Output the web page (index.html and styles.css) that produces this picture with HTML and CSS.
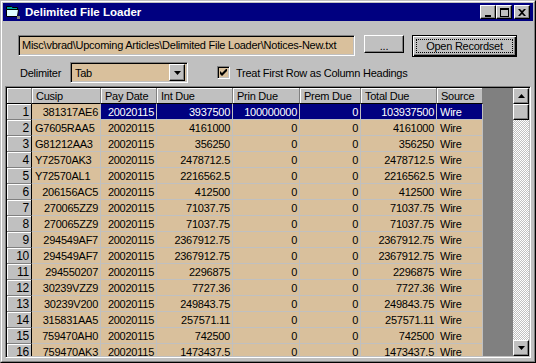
FILE: index.html
```html
<!DOCTYPE html>
<html lang="en">
<head>
    <meta charset="UTF-8">
    <title>Delimited File Loader</title>
    <link rel="stylesheet" href="styles.css">
</head>
<body>
    <div class="window">
        <div class="window-frame">
            <!-- title bar -->
            <div class="title-bar">
                <svg class="app-icon" width="16" height="16" viewBox="0 0 16 16">
                    <path d="M1.5 2.5h5l1 1h5v8h-11z" fill="#00a0a0" stroke="#000"/>
                    <path d="M1.5 5.5h12l-1 7h-11z" fill="#e0ffff" stroke="#000"/>
                    <path d="M12 12h3v3h-3z" fill="#808080"/>
                </svg>
                <span class="title-text">Delimited File Loader</span>
                <div class="title-buttons">
                    <div class="cap-btn">
                        <svg width="8" height="9" viewBox="0 0 8 9"><rect x="1" y="7" width="6" height="2"/></svg>
                    </div>
                    <div class="cap-btn">
                        <svg width="9" height="9" viewBox="0 0 9 9"><path d="M0 0h9v9H0z M1 2v6h7V2z" fill-rule="evenodd"/></svg>
                    </div>
                    <div class="cap-btn close">
                        <svg width="8" height="7" viewBox="0 0 8 7"><path d="M0 0h2l2 2 2-2h2L5 3.5 8 7H6L4 5 2 7H0l3-3.5z"/></svg>
                    </div>
                </div>
            </div>

            <div class="client">
                <div class="file-row">
                    <div class="textbox path-box">Misc\vbrad\Upcoming Articles\Delimited File Loader\Notices-New.txt</div>
                    <div class="button browse-button">...</div>
                    <div class="button default-button"><span class="focus-rect">Open Recordset</span></div>
                </div>

                <div class="options-row">
                    <span class="delim-label">Delimiter</span>
                    <div class="textbox combo">
                        <span class="combo-text">Tab</span>
                        <div class="combo-arrow">
                            <svg width="7" height="4" viewBox="0 0 7 4"><path d="M0 0h7L3.5 4z"/></svg>
                        </div>
                    </div>
                    <div class="checkbox">
                        <svg width="7" height="7" viewBox="0 0 7 7"><path d="M0 2l2 2 5-5v3l-5 5-2-2z"/></svg>
                    </div>
                    <span class="check-label">Treat First Row as Column Headings</span>
                </div>

                <div class="grid-box">
                    <div class="grid-area">
                        <div class="grid" id="grid"></div>
                    </div>
                    <div class="scrollbar">
                        <div class="scroll-btn">
                            <svg width="7" height="4" viewBox="0 0 7 4"><path d="M3.5 0L7 4H0z"/></svg>
                        </div>
                        <div class="scroll-btn"></div>
                        <div class="scroll-track"></div>
                        <div class="scroll-btn">
                            <svg width="7" height="4" viewBox="0 0 7 4"><path d="M0 0h7L3.5 4z"/></svg>
                        </div>
                    </div>
                </div>
            </div>
        </div>
    </div>

    <script>
        const headings = ["", "Cusip", "Pay Date", "Int Due", "Prin Due", "Prem Due", "Total Due", "Source"];

        const rows = [
            ["381317AE6", "20020115", "3937500", "100000000", "0", "103937500"],
            ["G7605RAA5", "20020115", "4161000", "0", "0", "4161000"],
            ["G81212AA3", "20020115", "356250", "0", "0", "356250"],
            ["Y72570AK3", "20020115", "2478712.5", "0", "0", "2478712.5"],
            ["Y72570AL1", "20020115", "2216562.5", "0", "0", "2216562.5"],
            ["206156AC5", "20020115", "412500", "0", "0", "412500"],
            ["270065ZZ9", "20020115", "71037.75", "0", "0", "71037.75"],
            ["270065ZZ9", "20020115", "71037.75", "0", "0", "71037.75"],
            ["294549AF7", "20020115", "2367912.75", "0", "0", "2367912.75"],
            ["294549AF7", "20020115", "2367912.75", "0", "0", "2367912.75"],
            ["294550207", "20020115", "2296875", "0", "0", "2296875"],
            ["30239VZZ9", "20020115", "7727.36", "0", "0", "7727.36"],
            ["30239V200", "20020115", "249843.75", "0", "0", "249843.75"],
            ["315831AA5", "20020115", "257571.11", "0", "0", "257571.11"],
            ["759470AH0", "20020115", "742500", "0", "0", "742500"],
            ["759470AK3", "20020115", "1473437.5", "0", "0", "1473437.5"]
        ];

        const grid = document.getElementById("grid");

        function addCell(text, className) {
            const cell = document.createElement("div");
            cell.className = "cell " + className;
            cell.textContent = text;
            grid.appendChild(cell);
        }

        headings.forEach(function(h) {
            addCell(h, "fixed head");
        });

        rows.forEach(function(r, i) {
            addCell(i + 1, "fixed row-head");
            // numbers (and cusips starting with a digit) are right aligned
            const cusipAlign = /^\d/.test(r[0]) ? "right" : "left";
            addCell(r[0], cusipAlign);
            for (let c = 1; c < r.length; c++) {
                addCell(r[c], "right" + (i === 0 ? " sel" : ""));
            }
            addCell("Wire", "left" + (i === 0 ? " sel" : ""));
        });
    </script>
</body>
</html>
```

FILE: styles.css
```css
body {
    margin: 0;
    font-family: "Liberation Sans", Arial, sans-serif;
    font-size: 11px;
    letter-spacing: -0.25px;
    color: #000;
}
.window {
    width: 536px;
    height: 363px;
    box-sizing: border-box;
    background-color: #c0c0c0;
    border: 1px solid;
    border-color: #c0c0c0 #000 #000 #c0c0c0;
}
.window-frame {
    height: 100%;
    box-sizing: border-box;
    border: 1px solid;
    border-color: #fff #808080 #808080 #fff;
    padding: 1px;
    display: flex;
    flex-direction: column;
}
.title-bar {
    height: 18px;
    flex-shrink: 0;
    background-color: #000080;
    color: #fff;
    display: flex;
    align-items: center;
    padding: 0 3px 0 2px;
}
.app-icon {
    margin-right: 4px;
}
.title-text {
    font-weight: bold;
    font-size: 11.5px;
    letter-spacing: 0;
    flex: 1;
}
.title-buttons {
    display: flex;
}
.cap-btn {
    width: 16px;
    height: 14px;
    box-sizing: border-box;
    background-color: #c0c0c0;
    border: 1px solid;
    border-color: #fff #000 #000 #fff;
    box-shadow: inset -1px -1px #808080;
    display: flex;
    align-items: center;
    justify-content: center;
}
.cap-btn.close {
    margin-left: 2px;
}

/* client area */
.client {
    flex: 1;
    display: flex;
    flex-direction: column;
}
.textbox {
    box-sizing: border-box;
    background-color: #d9c09c;
    border: 1px solid;
    border-color: #808080 #fff #fff #808080;
    box-shadow: inset 1px 1px #000, inset -1px -1px #c0c0c0;
}
.button {
    box-sizing: border-box;
    background-color: #c0c0c0;
    border: 1px solid;
    border-color: #fff #000 #000 #fff;
    box-shadow: inset -1px -1px #808080;
    display: flex;
    align-items: center;
    justify-content: center;
}
.file-row {
    display: flex;
    align-items: flex-start;
    margin-top: 14px;
    padding-left: 15px;
}
.path-box {
    width: 337px;
    height: 21px;
    line-height: 19px;
    padding-left: 3px;
    white-space: nowrap;
    overflow: hidden;
}
.browse-button {
    width: 40px;
    height: 18px;
    margin-left: 9px;
    padding-top: 3px;
}
.default-button {
    width: 105px;
    height: 22px;
    margin-left: 8px;
    border: 1px solid #000;
    box-shadow: inset 1px 1px #fff, inset -1px -1px #000, inset -2px -2px #808080;
    padding: 3px;
}
.focus-rect {
    flex: 1;
    align-self: stretch;
    border: 1px dotted #000;
    display: flex;
    align-items: center;
    justify-content: center;
}
.options-row {
    display: flex;
    align-items: center;
    height: 21px;
    margin-top: 5px;
    padding-left: 17px;
}
.delim-label {
    width: 50px;
}
.combo {
    width: 118px;
    height: 21px;
    display: flex;
    align-items: center;
    padding: 2px;
}
.combo-text {
    flex: 1;
    padding-left: 2px;
}
.combo-arrow {
    width: 16px;
    height: 17px;
    box-sizing: border-box;
    background-color: #c0c0c0;
    border: 1px solid;
    border-color: #fff #000 #000 #fff;
    box-shadow: inset -1px -1px #808080;
    display: flex;
    align-items: center;
    justify-content: center;
}
.checkbox {
    width: 13px;
    height: 13px;
    box-sizing: border-box;
    margin-left: 29px;
    background-color: #d9c09c;
    border: 1px solid;
    border-color: #808080 #fff #fff #808080;
    box-shadow: inset 1px 1px #000, inset -1px -1px #c0c0c0;
    display: flex;
    align-items: center;
    justify-content: center;
}
.check-label {
    margin-left: 6px;
}

/* flex grid */
.grid-box {
    width: 526px;
    height: 272px;
    box-sizing: border-box;
    margin: 3px 0 0 2px;
    border: 1px solid;
    border-color: #808080 #fff #fff #808080;
    box-shadow: inset 1px 1px #000, inset -1px -1px #c0c0c0;
    padding: 1px;
    display: flex;
}
.grid-area {
    flex: 1;
    background-color: #808080;
    overflow: hidden;
}
.grid {
    display: grid;
    grid-template-columns: 25px 69px 56px 76px 67px 61px 76px 46px;
    width: 476px;
}
.cell {
    height: 16px;
    box-sizing: border-box;
    line-height: 15px;
    padding: 1px 2px 0 3px;
    background-color: #d9c09c;
    border-right: 1px solid #c0c0c0;
    border-bottom: 1px solid #c0c0c0;
    white-space: nowrap;
    overflow: hidden;
}
.cell.right {
    text-align: right;
}
.cell.sel {
    background-color: #000080;
    color: #fff;
}
.cell.fixed {
    background-color: #c0c0c0;
    border-right-color: #000;
    border-bottom-color: #808080;
    box-shadow: inset 1px 1px #fff;
}
.cell.head {
    padding-left: 4px;
    border-bottom-color: #000;
    border-right-color: #808080;
}
.cell.row-head {
    text-align: right;
    font-size: 12px;
}
.scrollbar {
    width: 16px;
    display: flex;
    flex-direction: column;
}
.scroll-btn {
    width: 16px;
    height: 16px;
    box-sizing: border-box;
    background-color: #c0c0c0;
    border: 1px solid;
    border-color: #fff #000 #000 #fff;
    box-shadow: inset -1px -1px #808080;
    display: flex;
    align-items: center;
    justify-content: center;
}
.scroll-track {
    flex: 1;
    background: repeating-conic-gradient(#fff 0 25%, #c0c0c0 0 50%) 0 0 / 2px 2px;
}
```
